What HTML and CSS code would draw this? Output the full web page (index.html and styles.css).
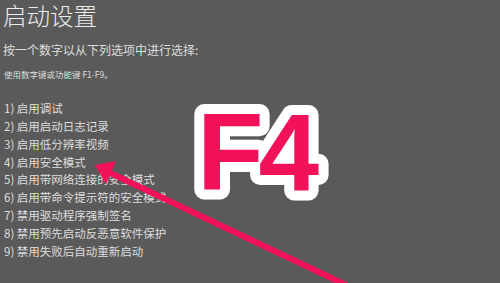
FILE: index.html
```html
<!DOCTYPE html>
<html lang="zh-CN">
<head>
    <meta charset="UTF-8">
    <meta name="viewport" content="width=device-width, initial-scale=1.0">
    <title>启动设置</title>
    <link rel="stylesheet" href="styles.css">
</head>
<body>
    <div class="screen">
        <h1 class="title">启动设置</h1>
        <p class="prompt">按一个数字以从下列选项中进行选择:</p>
        <p class="hint">使用数字键或功能键 F1-F9。</p>

        <!-- Options -->
        <ol class="options">
            <li>1) 启用调试</li>
            <li>2) 启用启动日志记录</li>
            <li>3) 启用低分辨率视频</li>
            <li>4) 启用安全模式</li>
            <li>5) 启用带网络连接的安全模式</li>
            <li>6) 启用带命令提示符的安全模式</li>
            <li>7) 禁用驱动程序强制签名</li>
            <li>8) 禁用预先启动反恶意软件保护</li>
            <li>9) 禁用失败后自动重新启动</li>
        </ol>

        <!-- Annotation over the screen -->
        <svg class="annotation" width="500" height="283" viewBox="0 0 500 283">
            <text class="key" x="197" y="190">F4</text>
            <line class="arrow-shaft" x1="106" y1="171" x2="346" y2="285"></line>
            <polygon class="arrow-head" points="95,165 116,161 106,184"></polygon>
        </svg>
    </div>
</body>
</html>
```

FILE: styles.css
```css
/* Boot options screen */
body {
    margin: 0;
    padding: 0;
    background-color: #5a5a5a;
    color: #dedede;
    font-family: "Noto Sans CJK SC", "Noto Sans", sans-serif;
}
.screen {
    position: relative;
    width: 500px;
    height: 283px;
    overflow: hidden;
    padding-left: 3px;
    box-sizing: border-box;
}
.title {
    margin: 0;
    font-size: 23.5px;
    font-weight: 300;
    line-height: 30px;
    color: #ececec;
}
.prompt {
    margin: 12px 0 0;
    font-size: 12px;
    line-height: 16px;
}
.hint {
    margin: 10px 0 0 1px;
    font-size: 8.5px;
    line-height: 12px;
}
.options {
    list-style: none;
    margin: 20px 0 0 1px;
    padding: 0;
    font-size: 11.5px;
    line-height: 17.85px;
}
.annotation {
    position: absolute;
    top: 0;
    left: 0;
}
.key {
    font-family: "Liberation Sans", Arial, sans-serif;
    font-weight: bold;
    font-size: 109px;
    letter-spacing: -5px;
    fill: #f2125a;
    stroke: #ffffff;
    stroke-width: 20px;
    stroke-linejoin: round;
    paint-order: stroke;
}
.arrow-shaft {
    stroke: #f2125a;
    stroke-width: 6px;
}
.arrow-head {
    fill: #f2125a;
}
```
